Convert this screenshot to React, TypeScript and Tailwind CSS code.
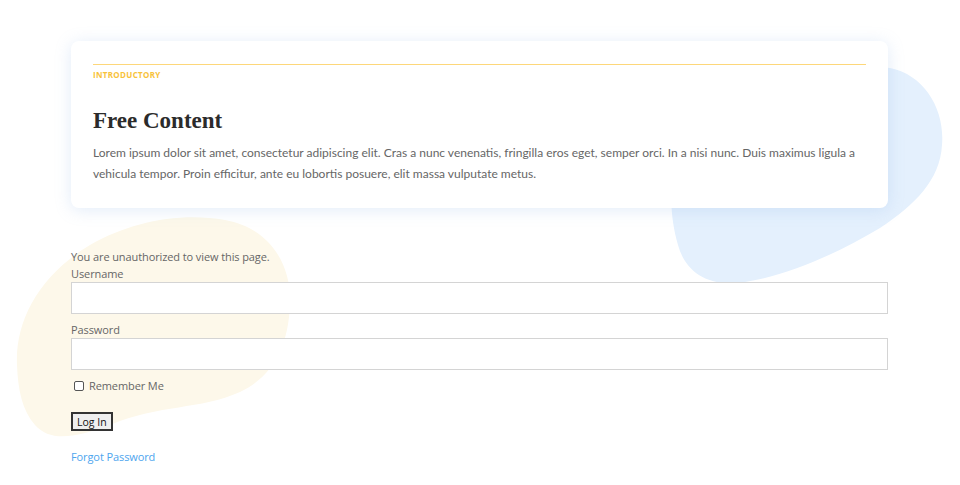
export default function App() {
  return (
    <div className="relative min-h-[485px] w-full overflow-hidden bg-white">
      <Blobs />
      <div className="relative ml-[71px] w-[817px] pt-[41px]">
        <IntroCard />
        <LoginForm />
      </div>
    </div>
  );
}

function Blobs() {
  return (
    <svg
      className="pointer-events-none absolute left-0 top-0"
      width="960"
      height="485"
      viewBox="0 0 960 485"
    >
      <path
        fill="#e4f0fd"
        d="M890 68 C925 75 945 110 942 145 C940 180 915 205 880 228 C840 252 790 275 745 282 C705 288 685 270 678 245 C668 210 665 160 700 120 C740 75 850 62 890 68 Z"
      />
      <path
        fill="#fdf8ea"
        d="M17 365 C15 320 40 275 90 245 C130 222 180 212 225 220 C270 228 292 265 290 305 C288 345 275 375 240 392 C200 410 160 404 110 425 C75 438 50 442 35 425 C22 410 18 390 17 365 Z"
      />
    </svg>
  );
}

function IntroCard() {
  return (
    <div className="rounded-[8px] bg-white px-[22px] pb-[24px] pt-[23px] shadow-[0_2px_16px_rgba(140,180,230,0.25)]">
      <div className="border-t border-[#fdd77a]" />
      <div
        className="mt-[5px] text-[8px] font-bold uppercase leading-[10px] tracking-[0.04em] text-[#f8c23a]"
        style={{ fontFamily: '"Open Sans", sans-serif' }}
      >
        Introductory
      </div>
      <h2
        className="mt-[26px] text-[23px] font-bold leading-[30px] text-[#2b2b2b]"
        style={{ fontFamily: '"Liberation Serif", serif' }}
      >
        Free Content
      </h2>
      <p
        className="mt-[6px] text-[12px] leading-[21px] text-[#666666]"
        style={{ fontFamily: '"Lato", "Liberation Sans", sans-serif' }}
      >
        Lorem ipsum dolor sit amet, consectetur adipiscing elit. Cras a nunc
        venenatis, fringilla eros eget, semper orci. In a nisi nunc. Duis
        maximus ligula a vehicula tempor. Proin efficitur, ante eu lobortis
        posuere, elit massa vulputate metus.
      </p>
    </div>
  );
}

function LoginForm() {
  return (
    <form
      className="mt-[40px] text-[11px] leading-[17px] tracking-[-0.1px] text-[#666666]"
      style={{ fontFamily: '"Open Sans", sans-serif' }}
    >
      <p>You are unauthorized to view this page.</p>
      <label className="block">Username</label>
      <input
        type="text"
        className="block h-[32px] w-full border border-[#d4d4d4] bg-white"
      />
      <label className="mt-[7px] block">Password</label>
      <input
        type="password"
        className="block h-[32px] w-full border border-[#d4d4d4] bg-white"
      />
      <label className="mt-[7px] flex items-center gap-[5px] pl-[3px]">
        <input
          type="checkbox"
          className="h-[10px] w-[10px] appearance-none rounded-[2px] border border-[#555] bg-white"
        />
        <span>Remember Me</span>
      </label>
      <button
        type="button"
        className="mt-[18px] block h-[19px] border-2 border-[#333] bg-[#efefef] px-[4px] text-[10.5px] leading-[14px] tracking-normal text-[#111]"
      >
        Log In
      </button>
      <a className="mt-[17px] block text-[#4ea5ee]" href="#">
        Forgot Password
      </a>
    </form>
  );
}
